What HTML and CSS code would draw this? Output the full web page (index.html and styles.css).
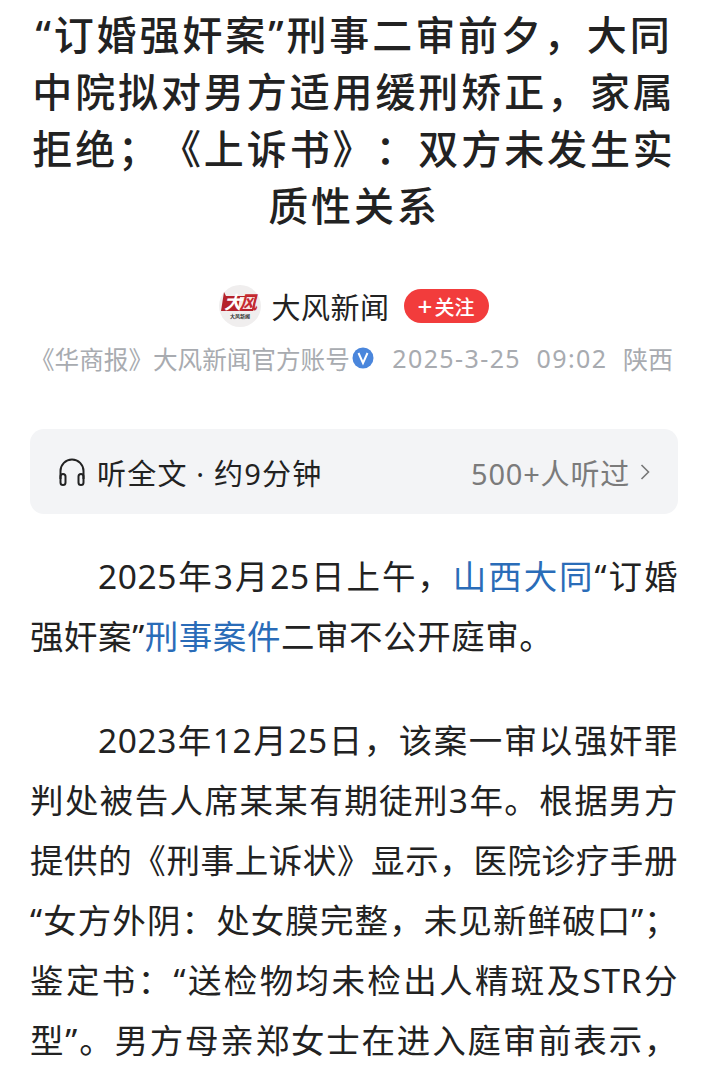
FILE: index.html
```html
<!DOCTYPE html>
<html lang="zh-CN">
<head>
  <meta charset="UTF-8" />
  <title>大风新闻</title>
  <link rel="stylesheet" href="styles.css">
</head>
<body>

<div class="article">
  <h1 class="headline">“订婚强奸案”刑事二审前夕，大同<br>中院拟对男方适用缓刑矫正，家属<br>拒绝；《上诉书》：双方未发生实<br>质性关系</h1>

  <div class="author">
    <svg class="avatar" viewBox="0 0 42 42" width="42" height="42">
      <circle cx="21" cy="21" r="21" fill="#f0eeee"/>
      <path d="M5 7l2 4h31l-4 15H2z" fill="#b5222b"/>
      <path d="M21 12h15l-3 12H19z" fill="#f6e6e4"/>
      <text class="logo-big" x="5" y="24" fill="#fff">大</text>
      <text class="logo-big" x="20" y="24" fill="#c62a30">风</text>
      <text class="logo-small" x="11" y="33" fill="#333">大风新闻</text>
    </svg>
    <span class="author-name">大风新闻</span>
    <span class="follow-btn"><b>+</b>关注</span>
  </div>

  <div class="meta">
    <span class="source">《华商报》大风新闻官方账号<svg class="verified" viewBox="0 0 22 22" width="22" height="22"><circle cx="11" cy="11" r="10.500" fill="#4a86dc"/><path d="M6.500 6l4.500 10 4.500-10" stroke="#fff" stroke-width="2" fill="none"/></svg></span>
    <span class="stamp">2025-3-25</span>
    <span class="stamp">09:02</span>
    <span>陕西</span>
  </div>

  <div class="listen-bar">
    <div class="listen-left">
      <svg class="headphones" viewBox="0 0 30 30" width="30" height="30">
        <path d="M3.500 22v-8a11.500 11.500 0 0 1 23 0v8" fill="none" stroke="#222" stroke-width="2"/>
        <rect x="3.500" y="17" width="5" height="11" rx="2.500" fill="none" stroke="#222" stroke-width="2"/>
        <rect x="21.500" y="17" width="5" height="11" rx="2.500" fill="none" stroke="#222" stroke-width="2"/>
      </svg>
      <span>听全文 · 约9分钟</span>
    </div>
    <div class="listen-right">
      <span>500+人听过</span>
      <svg viewBox="0 0 10 18" width="10" height="18"><path d="M1.500 2l7 7-7 7" fill="none" stroke="#777" stroke-width="1.600"/></svg>
    </div>
  </div>

  <p class="para">2025年3月25日上午，<a class="link">山西大同</a>“订婚强奸案”<a class="link">刑事案件</a>二审不公开庭审。</p>
  <p class="para para-cont">2023年12月25日，该案一审以强奸罪判处被告人席某某有期徒刑3年。根据男方提供的《刑事上诉状》显示，医院诊疗手册“女方外阴：处女膜完整，未见新鲜破口”；鉴定书：“送检物均未检出人精斑及STR分型”。男方母亲郑女士在进入庭审前表示，</p>
</div>

</body>
</html>
```

FILE: styles.css
```css
body {
  margin: 0;
  background: #fff;
  height: 1072px;
  overflow: hidden;
  font-family: "Noto Sans", "Noto Sans CJK SC", sans-serif;
  color: #222;
  text-spacing-trim: space-all;
}

.article {
  padding: 6px 25px 0 30px;
}

.headline {
  margin: 0;
  font-size: 40px;
  line-height: 57px;
  font-weight: 500;
  letter-spacing: 2.900px;
  text-align: center;
  color: #222;
}

.author {
  display: flex;
  align-items: center;
  justify-content: center;
  margin-top: 50px;
  height: 44px;
}

.avatar {
  margin-right: 10px;
}

.logo-big {
  font-size: 18px;
  font-weight: 700;
  font-style: italic;
}

.logo-small {
  font-size: 5px;
  font-weight: 700;
}

.author-name {
  font-size: 29px;
  letter-spacing: 0.5px;
  margin-right: 14px;
}

.follow-btn {
  background: #f23c3c;
  color: #fff;
  border-radius: 17px;
  height: 34px;
  width: 85px;
  display: flex;
  align-items: center;
  justify-content: center;
  font-size: 20px;
  font-weight: 500;
}

.follow-btn b {
  font-size: 26px;
  font-weight: 500;
  margin-right: 2px;
}

.meta {
  display: flex;
  justify-content: space-between;
  align-items: center;
  margin-top: 12px;
  padding-right: 5px;
  font-size: 25px;
  color: #a8abb0;
}

.source {
  display: flex;
  align-items: center;
  margin-right: 3px;
  font-size: 24.600px;
}

.verified {
  margin-left: 2px;
}

.stamp {
  letter-spacing: 1.400px;
}

.listen-bar {
  display: flex;
  justify-content: space-between;
  align-items: center;
  margin-top: 53px;
  height: 85px;
  padding: 0 28px 0 27px;
  background: #f3f4f6;
  border-radius: 14px;
  font-size: 29px;
  letter-spacing: 0.8px;
}

.listen-left,
.listen-right {
  display: flex;
  align-items: center;
  gap: 10px;
}

.listen-left {
  letter-spacing: 1.200px;
}

.listen-right {
  color: #7b7b7b;
}

.para {
  margin: 0 0 44px;
  font-size: 33.500px;
  line-height: 60px;
  letter-spacing: 0.55px;
  text-indent: 68px;
  text-align: justify;
  color: #222;
}

.listen-bar + .para {
  margin-top: 32px;
}

/* paragraph carries on past the fold, so its last line is a full one */
.para-cont {
  text-align-last: justify;
}

.link {
  color: #2a6cb8;
}
```
